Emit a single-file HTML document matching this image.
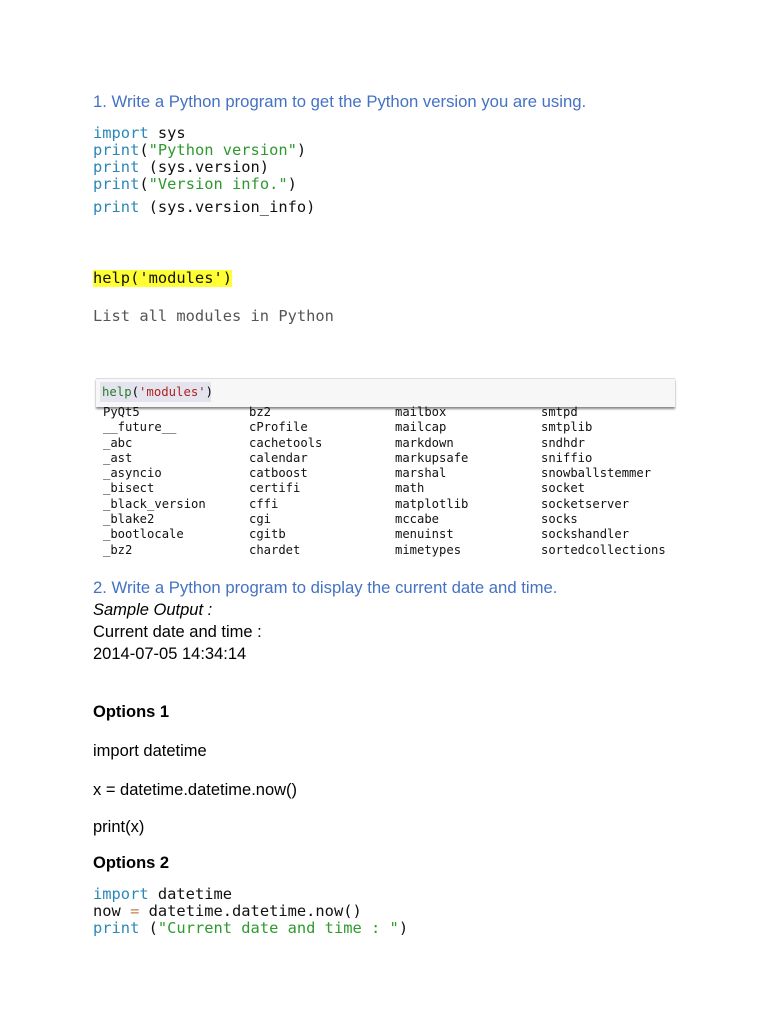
<!DOCTYPE html>
<html><head><meta charset="utf-8"><style>
body{margin:0;width:768px;height:1024px;background:#fff;position:relative;overflow:hidden;font-family:"Liberation Sans",Arial,sans-serif;}
.a{position:absolute;white-space:pre;line-height:20px;}
.h{color:#4472c4;font-size:16.7px;left:93px;}
.t{color:#000;font-size:16.5px;left:93px;}
.m{font-family:"DejaVu Sans Mono","Liberation Mono",monospace;font-size:15.4px;left:93px;color:#111;line-height:17px;}
.k{color:#2a88b8}.s{color:#2e9a2e}
.mod{position:absolute;font-family:"DejaVu Sans Mono","Liberation Mono",monospace;font-size:12.2px;line-height:15.3px;white-space:pre;color:#111;top:405px;}
</style></head><body>
<div class="a h" style="top:92px">1. Write a Python program to get the Python version you are using.</div>
<div class="a m" style="top:125px"><span class="k">import</span> sys
<span class="k">print</span>(<span class="s">"Python version"</span>)
<span class="k">print</span> (sys.version)
<span class="k">print</span>(<span class="s">"Version info."</span>)</div>
<div class="a m" style="top:199px"><span class="k">print</span> (sys.version_info)</div>
<div class="a m" style="top:270px;background:#ffff33;">help('modules')</div>
<div class="a m" style="top:308px;color:#555">List all modules in Python</div>

<div style="position:absolute;left:96px;top:378px;width:579px;height:28px;border-top:1px solid #ddd;background:#f7f7f7;box-shadow:0 2px 2px #888;"></div>
<div style="position:absolute;left:100px;top:382px;width:111px;height:20px;background:#e4e4ee;"></div>
<div class="a" style="left:102px;top:382px;font-family:'DejaVu Sans Mono',monospace;font-size:12.3px;"><span style="color:#2a7a2a">help</span>(<span style="color:#b02020">'modules'</span>)</div>
<div class="mod" style="left:103px">PyQt5
__future__
_abc
_ast
_asyncio
_bisect
_black_version
_blake2
_bootlocale
_bz2</div>
<div class="mod" style="left:249px">bz2
cProfile
cachetools
calendar
catboost
certifi
cffi
cgi
cgitb
chardet</div>
<div class="mod" style="left:395px">mailbox
mailcap
markdown
markupsafe
marshal
math
matplotlib
mccabe
menuinst
mimetypes</div>
<div class="mod" style="left:541px">smtpd
smtplib
sndhdr
sniffio
snowballstemmer
socket
socketserver
socks
sockshandler
sortedcollections</div>

<div class="a h" style="top:578px">2. Write a Python program to display the current date and time.</div>
<div class="a t" style="top:600px;font-style:italic">Sample Output :</div>
<div class="a t" style="top:622px">Current date and time :</div>
<div class="a t" style="top:644px">2014-07-05 14:34:14</div>
<div class="a t" style="top:702px;font-weight:bold">Options 1</div>
<div class="a t" style="top:741px">import datetime</div>
<div class="a t" style="top:780px">x = datetime.datetime.now()</div>
<div class="a t" style="top:817px">print(x)</div>
<div class="a t" style="top:853px;font-weight:bold">Options 2</div>
<div class="a m" style="top:886px"><span class="k">import</span> datetime
now <span style="color:#c08050">=</span> datetime.datetime.now()
<span class="k">print</span> (<span class="s">"Current date and time : "</span>)</div>
</body></html>
